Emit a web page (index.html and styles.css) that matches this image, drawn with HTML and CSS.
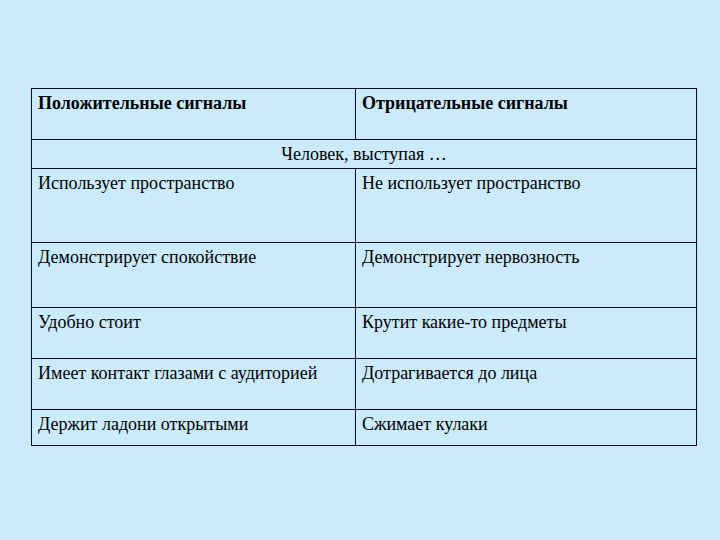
FILE: index.html
```html
<!DOCTYPE html>
<html lang="ru">
<head>
<meta charset="utf-8">
<link rel="stylesheet" href="styles.css">
<title>Сигналы</title>
</head>
<body>
<main class="page">
  <table class="signals">
    <colgroup>
      <col class="col-a">
      <col class="col-b">
    </colgroup>
    <tr class="r-head">
      <th>Положительные сигналы</th>
      <th>Отрицательные сигналы</th>
    </tr>
    <tr class="r-sub">
      <td colspan="2" class="center">Человек, выступая …</td>
    </tr>
    <tr class="r-1">
      <td>Использует пространство</td>
      <td>Не использует пространство</td>
    </tr>
    <tr class="r-2">
      <td>Демонстрирует спокойствие</td>
      <td>Демонстрирует нервозность</td>
    </tr>
    <tr class="r-3">
      <td>Удобно стоит</td>
      <td>Крутит какие-то предметы</td>
    </tr>
    <tr class="r-4">
      <td>Имеет контакт глазами с аудиторией</td>
      <td>Дотрагивается до лица</td>
    </tr>
    <tr class="r-5">
      <td>Держит ладони открытыми</td>
      <td>Сжимает кулаки</td>
    </tr>
  </table>
</main>
</body>
</html>
```

FILE: styles.css
```css
html, body {
  margin: 0;
  padding: 0;
  background: #cbebfd;
}
.page {
  width: 720px;
  height: 540px;
  box-sizing: border-box;
  padding: 88px 0 0 31px;
  font-family: "Liberation Serif", "Times New Roman", serif;
  font-size: 18px;
  color: #000;
}
.signals {
  table-layout: fixed;
  width: 666px;
  border-collapse: separate;
  border-spacing: 0;
  border-top: 1px solid #0b0b1a;
  border-left: 1px solid #0b0b1a;
}
.col-a { width: 324px; }
.col-b { width: 341px; }
.signals th,
.signals td {
  box-sizing: border-box;
  border-right: 1px solid #0b0b1a;
  border-bottom: 1px solid #0b0b1a;
  padding: 4px 6px 0 6px;
  vertical-align: top;
  text-align: left;
  line-height: 21px;
  font-weight: normal;
}
.signals th { font-weight: bold; }
.signals td.center { text-align: center; }
.r-head { height: 51px; }
.r-sub { height: 29px; }
.r-1 { height: 74px; }
.r-2 { height: 65px; }
.r-3 { height: 51px; }
.r-4 { height: 51px; }
.r-5 { height: 36px; }
```
